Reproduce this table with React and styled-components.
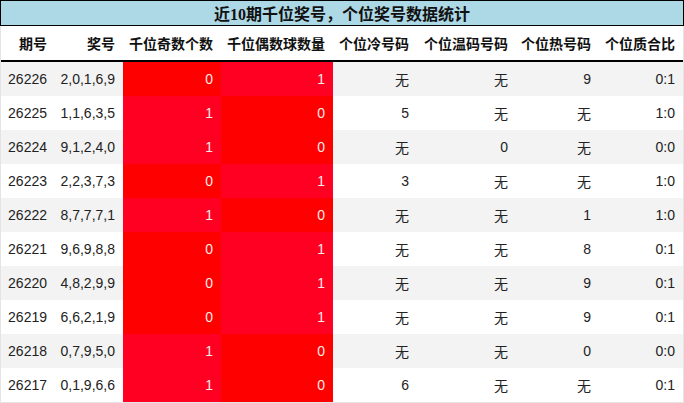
import React from 'react';
import styled, {createGlobalStyle} from 'styled-components';

const GlobalStyle = createGlobalStyle`
  body {
    margin: 0;
    background: #fff;
    font-family: "Liberation Sans", "Noto Sans CJK SC", sans-serif;
  }
`;

const COLS = '54px 68px 98px 112px 84px 99px 83px 84px';

const rows = [
  ['26226', '2,0,1,6,9', 0, 1, '无', '无', '9', '0:1'],
  ['26225', '1,1,6,3,5', 1, 0, '5', '无', '无', '1:0'],
  ['26224', '9,1,2,4,0', 1, 0, '无', '0', '无', '0:0'],
  ['26223', '2,2,3,7,3', 0, 1, '3', '无', '无', '1:0'],
  ['26222', '8,7,7,7,1', 1, 0, '无', '无', '1', '1:0'],
  ['26221', '9,6,9,8,8', 0, 1, '无', '无', '8', '0:1'],
  ['26220', '4,8,2,9,9', 0, 1, '无', '无', '9', '0:1'],
  ['26219', '6,6,2,1,9', 0, 1, '无', '无', '9', '0:1'],
  ['26218', '0,7,9,5,0', 1, 0, '无', '无', '0', '0:0'],
  ['26217', '0,1,9,6,6', 1, 0, '6', '无', '无', '0:1'],
];

const headers = ['期号', '奖号', '千位奇数个数', '千位偶数球数量', '个位冷号码', '个位温码号码', '个位热号码', '个位质合比'];

const Page = styled.div`
  width: 684px;
`;

const Title = styled.div`
  height: 24px;
  background: #add8e6;
  border: 1px solid #000;
  border-bottom-width: 1px;
  display: flex;
  align-items: center;
  justify-content: center;
  font-family: "Liberation Serif", "Noto Sans CJK SC", serif;
  font-weight: bold;
  font-size: 16px;
  color: #111;
`;

const Table = styled.div`
  border: 1px solid #e4e4e4;
  border-top: none;
`;

const HeadRow = styled.div`
  display: grid;
  grid-template-columns: ${COLS};
  height: 34px;
  border-bottom: 2px solid #000;
`;

const HeadCell = styled.div`
  display: flex;
  align-items: center;
  justify-content: flex-end;
  padding: 0 8px;
  font-family: "Noto Sans CJK SC", sans-serif;
  font-weight: bold;
  font-size: 14px;
  color: #111;
  white-space: nowrap;
`;

const Row = styled.div`
  display: grid;
  grid-template-columns: ${COLS};
  height: 34px;
  background: ${p => (p.$odd ? '#f3f3f3' : '#fff')};
`;

const Cell = styled.div`
  display: flex;
  align-items: center;
  justify-content: flex-end;
  padding: 0 8px;
  font-size: 14px;
  color: #222;
  white-space: nowrap;
`;

const RedCell = styled(Cell)`
  background: ${p => (p.$value ? '#ff0022' : '#ff0000')};
  color: #fdeaea;
`;

export default function App() {
  return (
    <Page>
      <GlobalStyle />
      <Title>近10期千位奖号，个位奖号数据统计</Title>
      <Table>
        <HeadRow>
          {headers.map(h => (
            <HeadCell key={h}>{h}</HeadCell>
          ))}
        </HeadRow>
        {rows.map((r, i) => (
          <Row key={r[0]} $odd={i % 2 === 0}>
            <Cell>{r[0]}</Cell>
            <Cell>{r[1]}</Cell>
            <RedCell $value={r[2]}>{r[2]}</RedCell>
            <RedCell $value={r[3]}>{r[3]}</RedCell>
            <Cell>{r[4]}</Cell>
            <Cell>{r[5]}</Cell>
            <Cell>{r[6]}</Cell>
            <Cell>{r[7]}</Cell>
          </Row>
        ))}
      </Table>
    </Page>
  );
}
